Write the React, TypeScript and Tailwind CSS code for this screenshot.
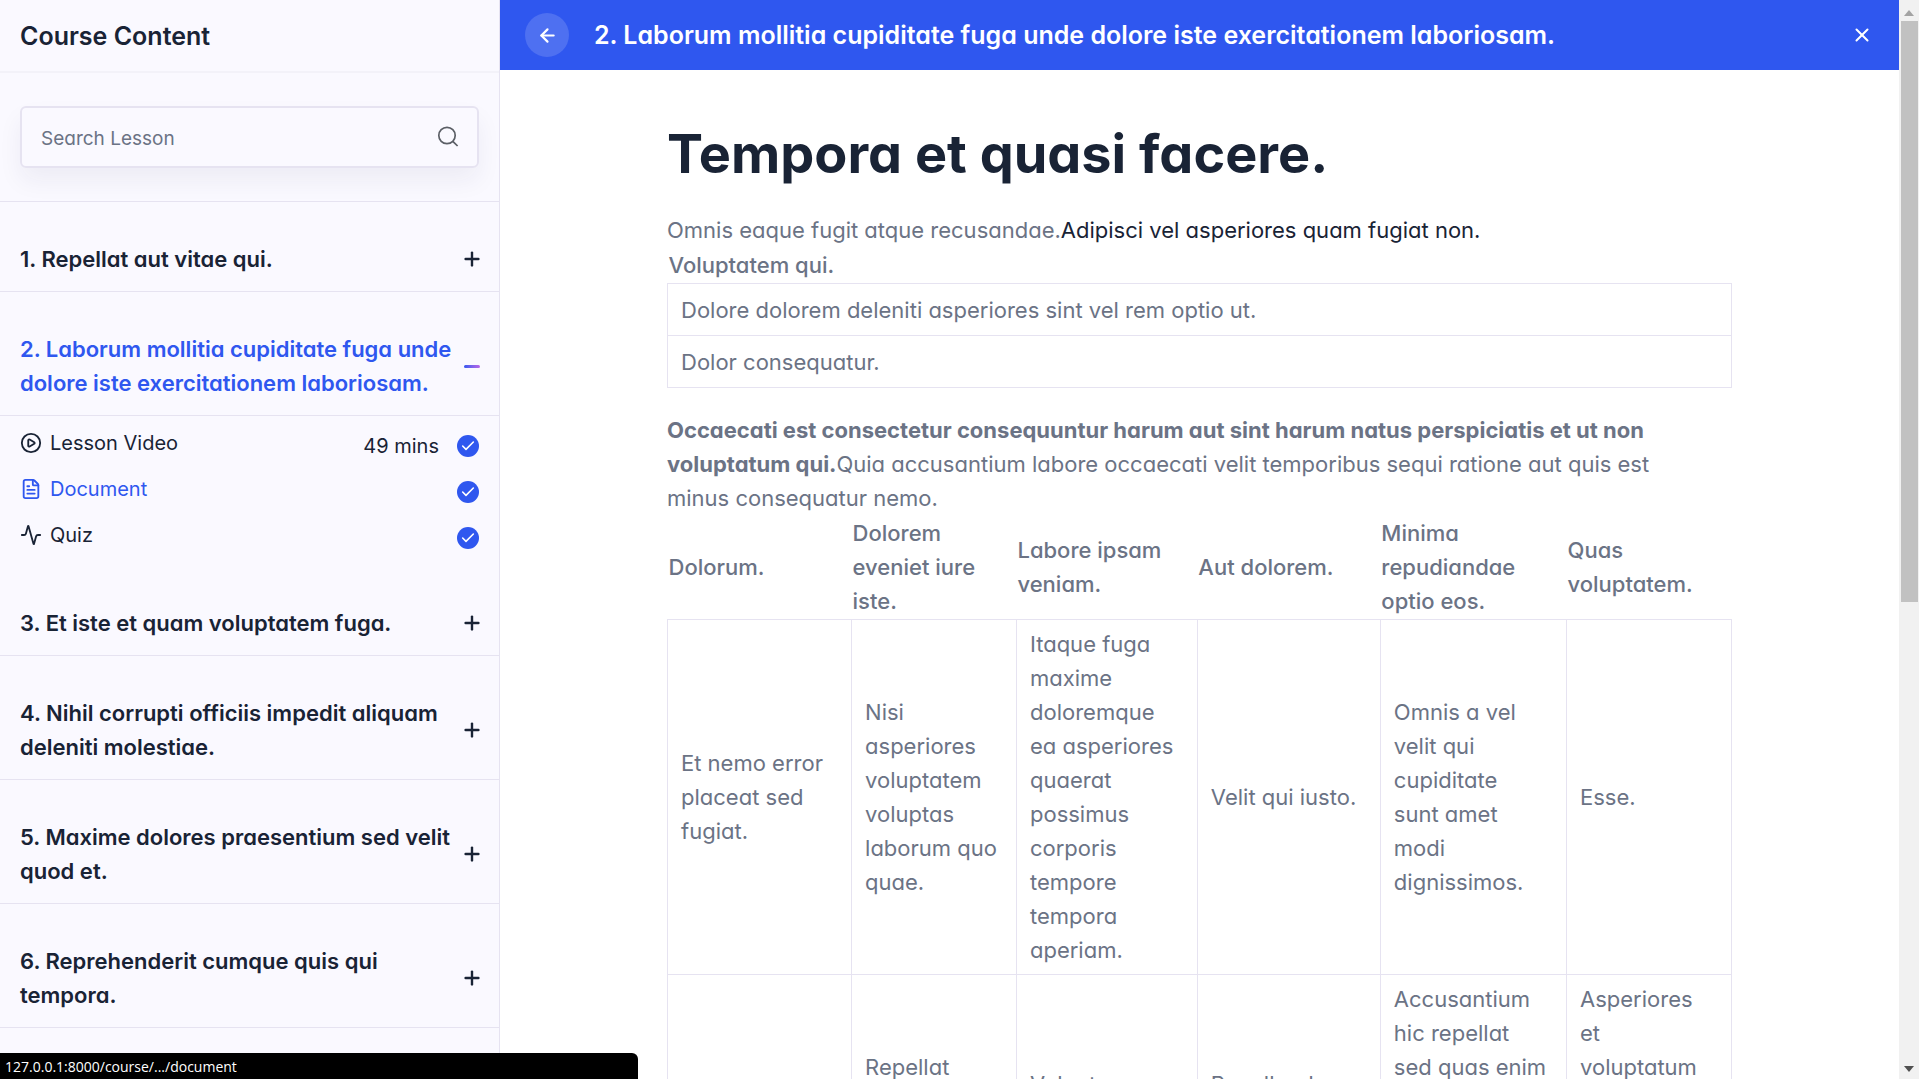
import { Activity, ArrowLeft, Check, CirclePlay, FileText, Plus, X } from "lucide-react";

const before = [{ title: "1. Repellat aut vitae qui." }];
const after = [
  { title: "3. Et iste et quam voluptatem fuga." },
  { title: "4. Nihil corrupti officiis impedit aliquam deleniti molestiae." },
  { title: "5. Maxime dolores praesentium sed velit quod et." },
  { title: "6. Reprehenderit cumque quis qui tempora." },
];

const lessons = [
  { label: "Lesson Video", Icon: CirclePlay, time: "49 mins", active: false },
  { label: "Document", Icon: FileText, time: "", active: true },
  { label: "Quiz", Icon: Activity, time: "", active: false },
];

const heads = [
  "Dolorum.",
  "Dolorem eveniet iure iste.",
  "Labore ipsam veniam.",
  "Aut dolorem.",
  "Minima repudiandae optio eos.",
  "Quas voluptatem.",
];

const rows = [
  [
    "Et nemo error placeat sed fugiat.",
    "Nisi asperiores voluptatem voluptas laborum quo quae.",
    "Itaque fuga maxime doloremque ea asperiores quaerat possimus corporis tempore tempora aperiam.",
    "Velit qui iusto.",
    "Omnis a vel velit qui cupiditate sunt\u00a0amet modi dignissimos.",
    "Esse.",
  ],
  [
    "Sit.",
    "Repellat voluptatem dignissimos.",
    "Voluptas consequatur.",
    "Repellendus consequatur.",
    "Accusantium hic repellat sed quas enim voluptatem repudiandae dignissimos consequatur.",
    "Asperiores et voluptatum dignissimos consequatur repellendus laudantium.",
  ],
];

function Section({ title, open = false }: { title: string; open?: boolean }) {
  return (
    <h2 className="border-b border-[#e6e3f1]">
      <button
        type="button"
        aria-expanded={open}
        className={
          "flex w-full items-center justify-between pt-10 pr-4 pb-[15px] pl-5 text-left text-[22px] leading-[34px] font-semibold " +
          (open ? "text-[#2f57ef]" : "text-[#192335]")
        }
      >
        <span>{title}</span>
        {open ? (
          <span className="mr-[3px] h-[3px] w-4 shrink-0 rounded-full bg-linear-to-r from-[#2f57ef] to-[#b966e7]" />
        ) : (
          <Plus size={22} strokeWidth={2.6} className="shrink-0" />
        )}
      </button>
    </h2>
  );
}

function Sidebar() {
  return (
    <aside className="w-[500px] shrink-0 overflow-hidden border-r border-[#e6e3f1] bg-[#faf9ff]">
      <div className="flex h-[73px] items-center border-b-2 border-[#f3f2f9] px-5">
        <h2 className="text-[25px] leading-8 font-semibold">Course Content</h2>
      </div>
      <div className="border-b border-[#e6e3f1] px-5 py-[33px]">
        <form className="flex h-[62px] items-center rounded-md border-2 border-[#e6e3f1] pr-[18px] pl-[19px] shadow-[0_13px_24px_rgba(40,40,80,0.06)]">
          <input
            type="text"
            aria-label="Search Lesson"
            placeholder="Search Lesson"
            className="min-w-0 flex-1 bg-transparent pt-[3px] text-[19px] leading-7 outline-none placeholder:text-[#6b7385]"
          />
          <button type="button" aria-label="Search" className="text-[#5b5f66]">
            <svg width="22" height="22" viewBox="0 0 22 22" fill="none" stroke="currentColor" strokeWidth="1.7">
              <circle cx="10" cy="9.5" r="8.2" />
              <path d="M15.8 15.3 20.6 20" />
            </svg>
          </button>
        </form>
      </div>
      {before.map((s) => (
        <Section key={s.title} title={s.title} />
      ))}
      <Section title="2. Laborum mollitia cupiditate fuga unde dolore iste exercitationem laboriosam." open />
      <ul className="px-5 pt-[5px] pb-[7px]">
        {lessons.map(({ label, Icon, time, active }) => (
          <li key={label}>
            <a
              href="#"
              className={
                "flex h-[46px] items-center justify-between text-[20px] leading-8 " +
                (active ? "text-[#2f57ef]" : "text-[#192335]")
              }
            >
              <span className="flex items-center gap-2 pb-[2px]">
                <Icon size={22} strokeWidth={2} />
                {label}
              </span>
              <span className="flex items-center gap-[18px] pt-1">
                {time && <span>{time}</span>}
                <span className="flex size-[22px] items-center justify-center rounded-full bg-[#2f57ef] text-white">
                  <Check size={16} strokeWidth={2.4} />
                </span>
              </span>
            </a>
          </li>
        ))}
      </ul>
      {after.map((s) => (
        <Section key={s.title} title={s.title} />
      ))}
    </aside>
  );
}

function Article() {
  return (
    <article className="mx-auto w-full max-w-[1065px] pt-[51px] text-[22px] leading-[34px] text-[#6b7385]">
      <h1 className="mb-[27px] text-[54px] leading-[65px] font-bold text-[#192335]">Tempora et quasi facere.</h1>
      <p>
        Omnis eaque fugit atque recusandae.
        <a href="#" className="text-[#192335]">
          Adipisci vel asperiores quam fugiat non.
        </a>
      </p>
      <table className="mb-[25px] w-full border-collapse">
        <thead>
          <tr>
            <th className="p-px text-left font-medium">Voluptatem qui.</th>
          </tr>
        </thead>
        <tbody>
          {["Dolore dolorem deleniti asperiores sint vel rem optio ut.", "Dolor consequatur."].map((t) => (
            <tr key={t} className="h-[52px]">
              <td className="border border-[#e6e3f1] px-[13px] py-[7px]">{t}</td>
            </tr>
          ))}
        </tbody>
      </table>
      <p className="pr-6">
        <strong>
          Occaecati est consectetur consequuntur harum aut sint harum natus perspiciatis et ut non voluptatum qui.
        </strong>
        Quia accusantium labore occaecati velit temporibus sequi ratione aut quis est minus consequatur nemo.
      </p>
      <table className="w-full table-fixed border-collapse">
        <colgroup>
          <col className="w-[17.3%]" />
          <col className="w-[15.5%]" />
          <col className="w-[17%]" />
          <col className="w-[17.2%]" />
          <col className="w-[17.5%]" />
          <col className="w-[15.5%]" />
        </colgroup>
        <thead>
          <tr>
            {heads.map((h) => (
              <th key={h} className="p-px text-left font-medium">
                {h}
              </th>
            ))}
          </tr>
        </thead>
        <tbody>
          {rows.map((r) => (
            <tr key={r[0]}>
              {r.map((c) => (
                <td key={c} className="border border-[#e6e3f1] px-[13px] py-[7px]">
                  {c}
                </td>
              ))}
            </tr>
          ))}
        </tbody>
      </table>
    </article>
  );
}

function ScrollBar() {
  return (
    <div className="flex w-5 shrink-0 flex-col items-center bg-[#f1f1f1]" aria-hidden="true">
      <div className="flex h-[21px] shrink-0 items-center pt-1">
        <svg width="10" height="6" viewBox="0 0 10 6">
          <path d="M5 0 10 6H0Z" fill="#a3a3a3" />
        </svg>
      </div>
      <div className="flex w-[17px] flex-1 flex-col">
        <div className="h-[56%] bg-[#c1c1c1]" />
      </div>
      <div className="flex h-[21px] shrink-0 items-center">
        <svg width="10" height="6" viewBox="0 0 10 6">
          <path d="M5 6 10 0H0Z" fill="#505050" />
        </svg>
      </div>
    </div>
  );
}

export default function App() {
  return (
    <div className="flex h-screen overflow-hidden bg-white font-[Inter,'Liberation_Sans',sans-serif] text-[#192335] [font-feature-settings:'cv11']">
      <Sidebar />
      <main className="flex min-w-0 flex-1 flex-col overflow-hidden">
        <header className="flex h-[70px] shrink-0 items-center gap-[25px] bg-[#2f57ef] pr-[26px] pl-[25px] text-white">
          <button
            type="button"
            aria-label="Back"
            className="flex size-11 shrink-0 items-center justify-center rounded-full bg-white/15"
          >
            <ArrowLeft size={21} strokeWidth={2.5} />
          </button>
          <h2 className="flex-1 text-[25px] leading-8 font-semibold">
            2. Laborum mollitia cupiditate fuga unde dolore iste exercitationem laboriosam.
          </h2>
          <button type="button" aria-label="Close" className="shrink-0">
            <X size={22} strokeWidth={2.2} />
          </button>
        </header>
        <div className="min-h-0 flex-1 overflow-hidden">
          <Article />
        </div>
      </main>
      <ScrollBar />
      <div className="fixed bottom-0 left-0 h-[26px] w-[638px] rounded-tr-md bg-black pl-[5px] font-['Open_Sans',sans-serif] text-[14px] leading-[27px] text-white">
        127.0.0.1:8000/course/.../document
      </div>
    </div>
  );
}
